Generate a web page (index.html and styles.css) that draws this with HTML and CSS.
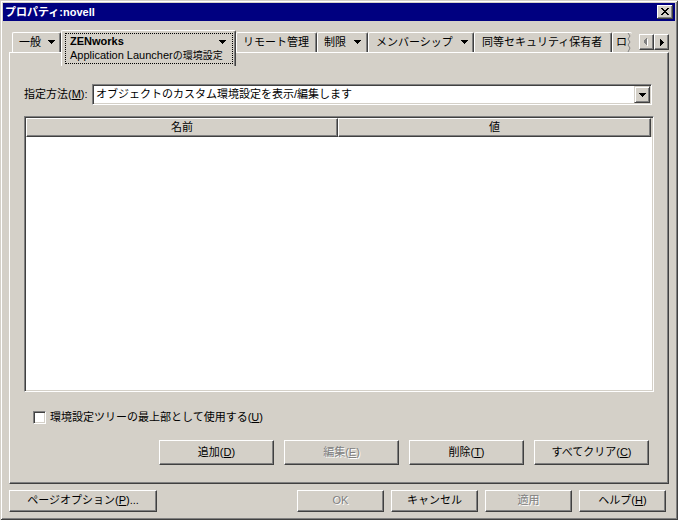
FILE: index.html
```html
<!DOCTYPE html>
<html lang="ja">
<head>
<meta charset="utf-8">
<title>プロパティ:novell</title>
<link rel="stylesheet" href="styles.css">
</head>
<body>
<div class="window">
  <div class="titlebar">
    <span class="title">プロパティ:novell</span>
    <span class="close"><svg width="8" height="7" viewBox="0 0 8 7" shape-rendering="crispEdges"><path d="M0 0h2v1h-2z M6 0h2v1h-2z M1 1h2v1h-2z M5 1h2v1h-2z M2 2h4v1h-4z M3 3h2v1h-2z M2 4h4v1h-4z M1 5h2v1h-2z M5 5h2v1h-2z M0 6h2v1h-2z M6 6h2v1h-2z"/></svg></span>
  </div>
  <div class="body">
    <div class="tabs">
      <div class="tab t-general"><span>一般</span><svg class="dn" width="7" height="4" viewBox="0 0 7 4" shape-rendering="crispEdges"><path d="M0 0h7v1h-1v1h-1v1h-1v1h-1v-1h-1v-1h-1v-1h-1z"/></svg></div>
      <div class="tab sel">
        <div class="focus">
          <div class="l1"><b>ZENworks</b><svg class="dn" width="7" height="4" viewBox="0 0 7 4" shape-rendering="crispEdges"><path d="M0 0h7v1h-1v1h-1v1h-1v1h-1v-1h-1v-1h-1v-1h-1z"/></svg></div>
          <div class="l2">Application Launcher<span class="jp10">の環境設定</span></div>
        </div>
      </div>
      <div class="tab t-remote">リモート管理</div>
      <div class="tab t-limit"><span>制限</span><svg class="dn" width="7" height="4" viewBox="0 0 7 4" shape-rendering="crispEdges"><path d="M0 0h7v1h-1v1h-1v1h-1v1h-1v-1h-1v-1h-1v-1h-1z"/></svg></div>
      <div class="tab t-member"><span>メンバーシップ</span><svg class="dn" width="7" height="4" viewBox="0 0 7 4" shape-rendering="crispEdges"><path d="M0 0h7v1h-1v1h-1v1h-1v1h-1v-1h-1v-1h-1v-1h-1z"/></svg></div>
      <div class="tab t-equal">同等セキュリティ保有者</div>
      <div class="tab t-cut"><span>ロ</span><svg class="torn" width="5" height="19" viewBox="0 0 5 19"><polyline points="1,0 3,3 1,6 3,9 1,12 3,15 1,19" fill="none" stroke="#808080" stroke-width="1"/></svg></div>
      <div class="scroll">
        <span class="sbtn"><svg width="5" height="8" viewBox="0 0 5 8" shape-rendering="crispEdges"><path fill="#fff" d="M4 1v7h-1v-1h-1v-1h-1v-1h-1v-1h1v-1h1v-1h1v-1z"/><path fill="#808080" d="M3 0v7h-1v-1h-1v-1h-1v-1h-1v-1h1v-1h1v-1h1v-1z"/></svg></span>
        <span class="sbtn"><svg width="4" height="7" viewBox="0 0 4 7" shape-rendering="crispEdges"><path d="M0 0v7h1v-1h1v-1h1v-1h1v-1h-1v-1h-1v-1h-1v-1z"/></svg></span>
      </div>
    </div>
    <div class="panel">
      <div class="row">
        <span class="label">指定方法(<u>M</u>):</span>
        <div class="combo">
          <span class="combo-text">オブジェクトのカスタム環境設定を表示/編集します</span>
          <span class="combo-btn"><svg width="7" height="4" viewBox="0 0 7 4" shape-rendering="crispEdges"><path d="M0 0h7v1h-1v1h-1v1h-1v1h-1v-1h-1v-1h-1v-1h-1z"/></svg></span>
        </div>
      </div>
      <div class="list">
        <div class="head">
          <div class="hcell c1">名前</div>
          <div class="hcell c2">値</div>
        </div>
        <div class="list-body"></div>
      </div>
      <div class="check">
        <span class="box"></span>
        <span class="check-label">環境設定ツリーの最上部として使用する(<u>U</u>)</span>
      </div>
      <div class="buttons">
        <div class="btn">追加(<u>D</u>)</div>
        <div class="btn disabled">編集(<u>E</u>)</div>
        <div class="btn">削除(<u>T</u>)</div>
        <div class="btn">すべてクリア(<u>C</u>)</div>
      </div>
    </div>
    <div class="footer">
      <div class="btn fbtn wide">ページオプション(<u>P</u>)...</div>
      <div class="fgroup">
        <div class="btn fbtn disabled">OK</div>
        <div class="btn fbtn">キャンセル</div>
        <div class="btn fbtn disabled">適用</div>
        <div class="btn fbtn">ヘルプ(<u>H</u>)</div>
      </div>
    </div>
  </div>
</div>
</body>
</html>
```

FILE: styles.css
```css
* { box-sizing: border-box; }

body {
  margin: 0;
  background: #d4d0c8;
  color: #000;
  font: 11px/13px "Liberation Sans", "Noto Sans CJK JP", sans-serif;
}

u { text-decoration: underline; }

.window {
  width: 678px;
  height: 520px;
  padding: 3px;
  background: #d4d0c8;
  box-shadow: inset 1px 1px #d4d0c8, inset -1px -1px #404040, inset 2px 2px #fff, inset -2px -2px #808080;
  display: flex;
  flex-direction: column;
}

.titlebar {
  height: 18px;
  background: #000080;
  color: #fff;
  font-weight: bold;
  display: flex;
  align-items: center;
  justify-content: space-between;
  padding: 0 2px;
}

.title { font-size: 11px; }

.close {
  width: 16px;
  height: 14px;
  background: #d4d0c8;
  box-shadow: inset -1px -1px #404040, inset 1px 1px #fff, inset -2px -2px #808080;
  display: flex;
  align-items: center;
  justify-content: center;
  padding-bottom: 1px;
}

.body {
  flex: 1;
  padding: 9px 6px 0 6px;
  display: flex;
  flex-direction: column;
}

/* Tabs */
.tabs {
  height: 22px;
  display: flex;
  align-items: flex-start;
  padding-left: 3px;
}

.tab {
  height: 20px;
  margin-top: 2px;
  border-top: 1px solid #fff;
  border-left: 1px solid #fff;
  border-right: 1px solid #404040;
  box-shadow: inset -1px 0 #808080;
  border-radius: 2px 2px 0 0;
  display: flex;
  align-items: center;
  white-space: nowrap;
  padding: 0 0 1px 6px;
  flex: none;
}

.dn { display: block; flex: none; }

.t-general { width: 49px; padding-left: 6px; gap: 7px; }
.t-remote { width: 81px; padding-left: 6px; }
.t-limit { width: 51px; padding-left: 6px; gap: 8px; }
.t-member { width: 106px; padding-left: 7px; gap: 8px; }
.t-equal { width: 138px; padding-left: 7px; }
.t-cut {
  width: 20px;
  padding-left: 3px;
  border-right: none;
  box-shadow: none;
  justify-content: space-between;
  overflow: hidden;
}
.torn { display: block; }

.sel {
  width: 175px;
  height: 36px;
  margin-top: 0;
  position: relative;
  z-index: 1;
  background: #d4d0c8;
  padding: 2px 2px 0 3px;
  align-items: flex-start;
}

.focus {
  width: 100%;
  height: 31px;
  border: 1px dotted #000;
  padding: 1px 0 0 4px;
}

.l1 {
  display: flex;
  align-items: center;
  justify-content: space-between;
  padding-right: 6px;
  height: 13px;
}
.l1 b { font-weight: bold; }

.l2 { margin-top: 1px; white-space: nowrap; }
.jp10 { font-size: 10px; }

.scroll {
  margin-left: auto;
  margin-top: 4px;
  display: flex;
}

.sbtn {
  width: 15px;
  height: 16px;
  background: #d4d0c8;
  border-top: 1px solid #fff;
  border-left: 1px solid #fff;
  border-right: 1px solid #404040;
  border-bottom: 1px solid #404040;
  box-shadow: inset -1px -1px #808080;
  display: flex;
  align-items: center;
  justify-content: center;
}
.sbtn svg { display: block; }

/* Panel */
.panel {
  height: 432px;
  flex: none;
  border-top: 1px solid #fff;
  border-left: 1px solid #fff;
  border-right: 1px solid #404040;
  border-bottom: 1px solid #404040;
  box-shadow: inset -1px -1px #808080;
  padding: 31px 14px 0 14px;
  display: flex;
  flex-direction: column;
}

.row {
  display: flex;
  align-items: center;
  height: 21px;
}

.label { width: 68px; flex: none; }

.combo {
  flex: 1;
  height: 21px;
  margin-right: 2px;
  background: #fff;
  border-top: 1px solid #808080;
  border-left: 1px solid #808080;
  border-bottom: 1px solid #fff;
  border-right: 1px solid #fff;
  box-shadow: inset 1px 1px #404040, inset -1px -1px #d4d0c8;
  padding: 1px 1px 1px 3px;
  display: flex;
  align-items: center;
}

.combo-text { flex: 1; white-space: nowrap; }

.combo-btn {
  width: 16px;
  height: 17px;
  background: #d4d0c8;
  border-top: 1px solid #d4d0c8;
  border-left: 1px solid #d4d0c8;
  border-right: 1px solid #404040;
  border-bottom: 1px solid #404040;
  box-shadow: inset 1px 1px #fff, inset -1px -1px #808080;
  display: flex;
  align-items: center;
  justify-content: center;
}
.combo-btn svg { display: block; }

.list {
  margin-top: 11px;
  height: 276px;
  flex: none;
  border-top: 1px solid #808080;
  border-left: 1px solid #808080;
  border-bottom: 1px solid #fff;
  border-right: 1px solid #fff;
  box-shadow: inset 1px 1px #404040, inset -1px -1px #d4d0c8;
  padding: 1px;
  display: flex;
  flex-direction: column;
  background: #fff;
}

.head { display: flex; height: 19px; flex: none; background: #d4d0c8; }

.hcell {
  height: 19px;
  border-top: 1px solid #fff;
  border-left: 1px solid #fff;
  border-right: 1px solid #404040;
  border-bottom: 1px solid #404040;
  box-shadow: inset -1px -1px #808080;
  text-align: center;
  line-height: 16px;
  background: #d4d0c8;
}
.c1 { width: 312px; }
.c2 { width: 313px; }

.list-body { flex: 1; background: #fff; }

.check {
  margin-top: 19px;
  display: flex;
  align-items: center;
  height: 13px;
}

.box {
  width: 13px;
  height: 13px;
  margin-left: 9px;
  background: #fff;
  border-top: 1px solid #808080;
  border-left: 1px solid #808080;
  border-bottom: 1px solid #fff;
  border-right: 1px solid #fff;
  box-shadow: inset 1px 1px #404040, inset -1px -1px #d4d0c8;
  flex: none;
}

.check-label { margin-left: 4px; white-space: nowrap; }

.buttons {
  margin-top: 16px;
  display: flex;
  justify-content: flex-end;
  gap: 10px;
  padding-right: 5px;
}

.btn {
  width: 115px;
  height: 25px;
  border-top: 1px solid #fff;
  border-left: 1px solid #fff;
  border-right: 1px solid #404040;
  border-bottom: 1px solid #404040;
  box-shadow: inset -1px -1px #808080;
  display: flex;
  align-items: center;
  justify-content: center;
  white-space: nowrap;
  padding-bottom: 1px;
}

.btn.disabled {
  color: #808080;
  text-shadow: 1px 1px #fff;
}

.footer {
  margin-top: 6px;
  display: flex;
  justify-content: space-between;
}

.fbtn { width: 87px; height: 22px; }
.wide { width: 148px; }

.fgroup {
  display: flex;
  gap: 7px;
  margin-right: 3px;
}
```
